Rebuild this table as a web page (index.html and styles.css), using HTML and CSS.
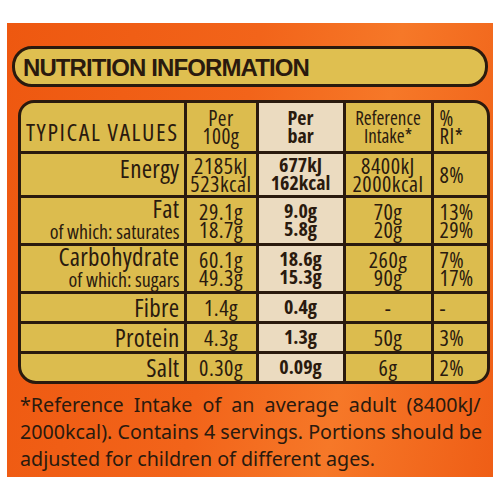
FILE: index.html
```html
<!DOCTYPE html>
<html>
<head>
    <title>Nutrition Information</title>
    <link rel="stylesheet" href="styles.css">
</head>
<body>
    <div class="pack">
        <div class="title">NUTRITION INFORMATION</div>

        <div class="frame">
            <table class="facts">
                <colgroup>
                    <col class="c-label">
                    <col class="c-100">
                    <col class="c-bar">
                    <col class="c-ref">
                    <col class="c-ri">
                </colgroup>
                <tr class="head">
                    <th class="label">TYPICAL VALUES</th>
                    <th class="num">Per<br>100g</th>
                    <th class="num bar">Per<br>bar</th>
                    <th class="num ref">Reference<br>Intake*</th>
                    <th class="ri">%<br>RI*</th>
                </tr>
                <tr class="energy">
                    <td class="label">Energy</td>
                    <td class="num">2185kJ<br>523kcal</td>
                    <td class="num bar">677kJ<br>162kcal</td>
                    <td class="num">8400kJ<br>2000kcal</td>
                    <td class="ri">8%</td>
                </tr>
                <tr class="pair">
                    <td class="label">Fat<br><span class="sub">of which: saturates</span></td>
                    <td class="num">29.1g<br>18.7g</td>
                    <td class="num bar">9.0g<br>5.8g</td>
                    <td class="num">70g<br>20g</td>
                    <td class="ri">13%<br>29%</td>
                </tr>
                <tr class="pair">
                    <td class="label">Carbohydrate<br><span class="sub">of which: sugars</span></td>
                    <td class="num">60.1g<br>49.3g</td>
                    <td class="num bar">18.6g<br>15.3g</td>
                    <td class="num">260g<br>90g</td>
                    <td class="ri">7%<br>17%</td>
                </tr>
                <tr class="single">
                    <td class="label">Fibre</td>
                    <td class="num">1.4g</td>
                    <td class="num bar">0.4g</td>
                    <td class="num">-</td>
                    <td class="ri">-</td>
                </tr>
                <tr class="single">
                    <td class="label">Protein</td>
                    <td class="num">4.3g</td>
                    <td class="num bar">1.3g</td>
                    <td class="num">50g</td>
                    <td class="ri">3%</td>
                </tr>
                <tr class="single last">
                    <td class="label">Salt</td>
                    <td class="num">0.30g</td>
                    <td class="num bar">0.09g</td>
                    <td class="num">6g</td>
                    <td class="ri">2%</td>
                </tr>
            </table>
        </div>

        <p class="note"><span class="wide">*Reference Intake of an average adult (8400kJ/</span><br>2000kcal). Contains 4 servings. Portions should be<br>adjusted for children of different ages.</p>
    </div>
</body>
</html>
```

FILE: styles.css
```css
* {
    margin: 0;
    padding: 0;
    box-sizing: border-box;
}

body {
    background: #ffffff;
    width: 500px;
    height: 500px;
    padding: 23px 7px;
}

.pack {
    height: 454px;
    background: linear-gradient(100deg, #ee5810 0%, #f2641a 45%, #f67828 70%, #ef5e16 100%);
    padding: 23px 5px 0 5px;
    color: #2a1a0e;
}

.title {
    height: 41px;
    border: 3px solid #2a1a0e;
    border-radius: 20px;
    background: #dfbf50;
    font-family: "Liberation Sans", sans-serif;
    font-weight: bold;
    font-size: 24px;
    letter-spacing: -0.9px;
    line-height: 38px;
    padding-left: 8px;
}

.frame {
    margin: 13px 0 0 6px;
    width: 472px;
    border: 3px solid #2a1a0e;
    border-radius: 16px 16px 16px 18px;
    overflow: hidden;
    background: #dcbc4e;
}

.facts {
    width: 100%;
    border-collapse: collapse;
    border-style: hidden;
    table-layout: fixed;
    font-family: "Open Sans", sans-serif;
    font-stretch: 75%;
}

.c-label { width: 164px; }
.c-100 { width: 72px; }
.c-bar { width: 87px; }
.c-ref { width: 88px; }
.c-ri { width: 55px; }

.facts th,
.facts td {
    border: 3px solid #2a1a0e;
    font-weight: normal;
    vertical-align: middle;
    white-space: nowrap;
}

.label {
    text-align: right;
    padding-right: 4px;
    font-size: 25px;
    letter-spacing: 0.3px;
    line-height: 21px;
}

.head .label {
    text-align: left;
    padding-left: 5px;
    padding-top: 10px;
    font-size: 24px;
    letter-spacing: 1.6px;
}

.sub {
    font-size: 20px;
    letter-spacing: 0;
}

.num {
    text-align: center;
    font-size: 22px;
    letter-spacing: 0.5px;
    line-height: 18px;
}

.head .num,
.head .ri {
    font-size: 21px;
    letter-spacing: 0.5px;
    line-height: 18px;
}

.head .ref {
    font-size: 19px;
    letter-spacing: 0;
}

.ri {
    text-align: left;
    padding-left: 6px;
    font-size: 22px;
    letter-spacing: 0.3px;
    line-height: 18px;
}

.bar {
    background: #ebdbc0;
}

.facts .bar {
    font-weight: bold;
    font-size: 20px;
    letter-spacing: 0;
}

.head th {
    height: 49px;
}

.energy td {
    height: 44px;
}

.energy .label {
    vertical-align: top;
    padding-top: 4px;
}

.pair td {
    height: 48px;
}

.single td {
    height: 30px;
}

.single.last td {
    height: 29px;
}

.note {
    font-family: "Noto Sans", sans-serif;
    font-size: 19.7px;
    line-height: 27px;
    padding: 7px 4px 0 8px;
    white-space: nowrap;
}

.wide {
    word-spacing: 5px;
}
```
